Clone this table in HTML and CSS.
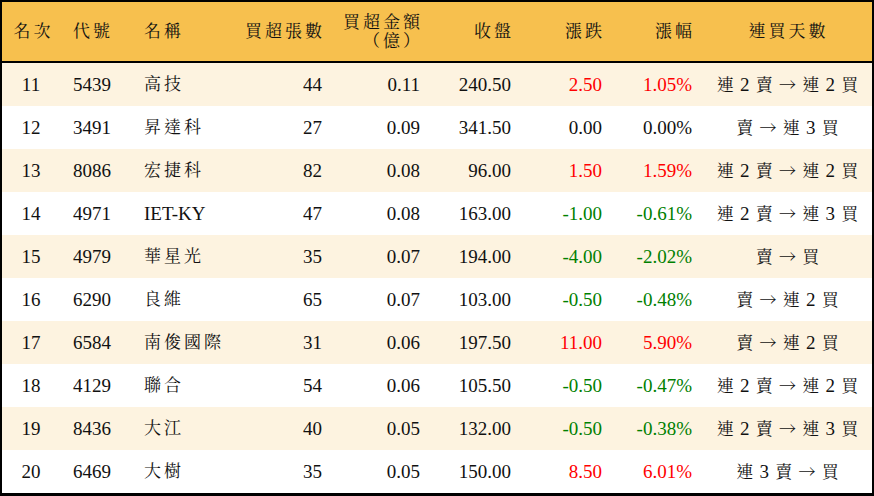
FILE: index.html
```html
<!DOCTYPE html>
<html lang="zh-Hant">
<head>
<meta charset="utf-8">
<title>買超排行</title>
<link rel="stylesheet" href="styles.css">
</head>
<body>
<table class="rank">
  <colgroup>
    <col class="c1"><col class="c2"><col class="c3"><col class="c4"><col class="c5"><col class="c6"><col class="c7"><col class="c8"><col class="c9">
  </colgroup>
  <thead>
    <tr>
      <th class="center">名次</th>
      <th class="left code">代號</th>
      <th class="left name">名稱</th>
      <th class="right">買超張數</th>
      <th class="right two">買超金額<br>（億）</th>
      <th class="right">收盤</th>
      <th class="right">漲跌</th>
      <th class="right">漲幅</th>
      <th class="center">連買天數</th>
    </tr>
  </thead>
  <tbody>
    <tr><td class="center">11</td><td class="code">5439</td><td class="name zh">高技</td><td class="right">44</td><td class="right">0.11</td><td class="right">240.50</td><td class="right up">2.50</td><td class="right up">1.05%</td><td class="days">連 <span class="n">2</span> 賣 <span class="arrow">→</span> 連 <span class="n">2</span> 買</td></tr>
    <tr><td class="center">12</td><td class="code">3491</td><td class="name zh">昇達科</td><td class="right">27</td><td class="right">0.09</td><td class="right">341.50</td><td class="right">0.00</td><td class="right">0.00%</td><td class="days">賣 <span class="arrow">→</span> 連 <span class="n">3</span> 買</td></tr>
    <tr><td class="center">13</td><td class="code">8086</td><td class="name zh">宏捷科</td><td class="right">82</td><td class="right">0.08</td><td class="right">96.00</td><td class="right up">1.50</td><td class="right up">1.59%</td><td class="days">連 <span class="n">2</span> 賣 <span class="arrow">→</span> 連 <span class="n">2</span> 買</td></tr>
    <tr><td class="center">14</td><td class="code">4971</td><td class="name">IET-KY</td><td class="right">47</td><td class="right">0.08</td><td class="right">163.00</td><td class="right down">-1.00</td><td class="right down">-0.61%</td><td class="days">連 <span class="n">2</span> 賣 <span class="arrow">→</span> 連 <span class="n">3</span> 買</td></tr>
    <tr><td class="center">15</td><td class="code">4979</td><td class="name zh">華星光</td><td class="right">35</td><td class="right">0.07</td><td class="right">194.00</td><td class="right down">-4.00</td><td class="right down">-2.02%</td><td class="days">賣 <span class="arrow">→</span> 買</td></tr>
    <tr><td class="center">16</td><td class="code">6290</td><td class="name zh">良維</td><td class="right">65</td><td class="right">0.07</td><td class="right">103.00</td><td class="right down">-0.50</td><td class="right down">-0.48%</td><td class="days">賣 <span class="arrow">→</span> 連 <span class="n">2</span> 買</td></tr>
    <tr><td class="center">17</td><td class="code">6584</td><td class="name zh">南俊國際</td><td class="right">31</td><td class="right">0.06</td><td class="right">197.50</td><td class="right up">11.00</td><td class="right up">5.90%</td><td class="days">賣 <span class="arrow">→</span> 連 <span class="n">2</span> 買</td></tr>
    <tr><td class="center">18</td><td class="code">4129</td><td class="name zh">聯合</td><td class="right">54</td><td class="right">0.06</td><td class="right">105.50</td><td class="right down">-0.50</td><td class="right down">-0.47%</td><td class="days">連 <span class="n">2</span> 賣 <span class="arrow">→</span> 連 <span class="n">2</span> 買</td></tr>
    <tr><td class="center">19</td><td class="code">8436</td><td class="name zh">大江</td><td class="right">40</td><td class="right">0.05</td><td class="right">132.00</td><td class="right down">-0.50</td><td class="right down">-0.38%</td><td class="days">連 <span class="n">2</span> 賣 <span class="arrow">→</span> 連 <span class="n">3</span> 買</td></tr>
    <tr><td class="center">20</td><td class="code">6469</td><td class="name zh">大樹</td><td class="right">35</td><td class="right">0.05</td><td class="right">150.00</td><td class="right up">8.50</td><td class="right up">6.01%</td><td class="days">連 <span class="n">3</span> 賣 <span class="arrow">→</span> 買</td></tr>
  </tbody>
</table>
</body>
</html>
```

FILE: styles.css
```css
html, body {
  margin: 0;
  padding: 0;
  background: #ffffff;
}

.rank {
  width: 874px;
  table-layout: fixed;
  border-collapse: separate;
  border-spacing: 0;
  border: 2px solid #000;
  border-bottom-width: 3px;
  font-family: "Liberation Serif", "Noto Serif CJK TC", "Noto Sans CJK TC", serif;
  font-size: 19px;
  color: #111;
}

.c1 { width: 60px; }
.c2 { width: 72px; }
.c3 { width: 106px; }
.c4 { width: 92px; }
.c5 { width: 98px; }
.c6 { width: 91px; }
.c7 { width: 91px; }
.c8 { width: 90px; }
.c9 { width: 170px; }

.rank th {
  height: 61px;
  padding: 0 7px 0 0;
  background: #f7c04e;
  border-bottom: 2px solid #000;
  font-weight: normal;
  font-size: 17px;
  letter-spacing: 3px;
  line-height: 19px;
  vertical-align: middle;
  box-sizing: border-box;
}

.rank th.center { padding: 0 0 0 3px; }
.rank th.left { padding-right: 0; }
.rank th.two { line-height: 19px; padding-top: 1px; }

.rank td {
  height: 43px;
  padding: 0 10px 0 0;
  vertical-align: middle;
  line-height: 22px;
  white-space: nowrap;
  box-sizing: border-box;
}

.rank tbody tr:nth-child(odd) td { background: #fdf3e0; }

.center { text-align: center; }
.right { text-align: right; }
.left { text-align: left; }

.rank td.center { padding: 0 2px 0 0; }
.rank .code { text-align: left; padding-left: 11px; padding-right: 0; }
.rank .name { text-align: left; padding-left: 10px; padding-right: 0; }
.rank td.zh { font-size: 17px; letter-spacing: 3px; }

.rank td.days {
  text-align: center;
  padding: 0 0 0 2px;
  font-size: 17px;
  letter-spacing: 1px;
}

.n { font-size: 19px; }

.arrow {
  font-family: "Noto Serif CJK TC", "Noto Sans CJK TC", "DejaVu Serif", serif;
}

.up { color: #ff0000; }
.down { color: #008000; }
```
